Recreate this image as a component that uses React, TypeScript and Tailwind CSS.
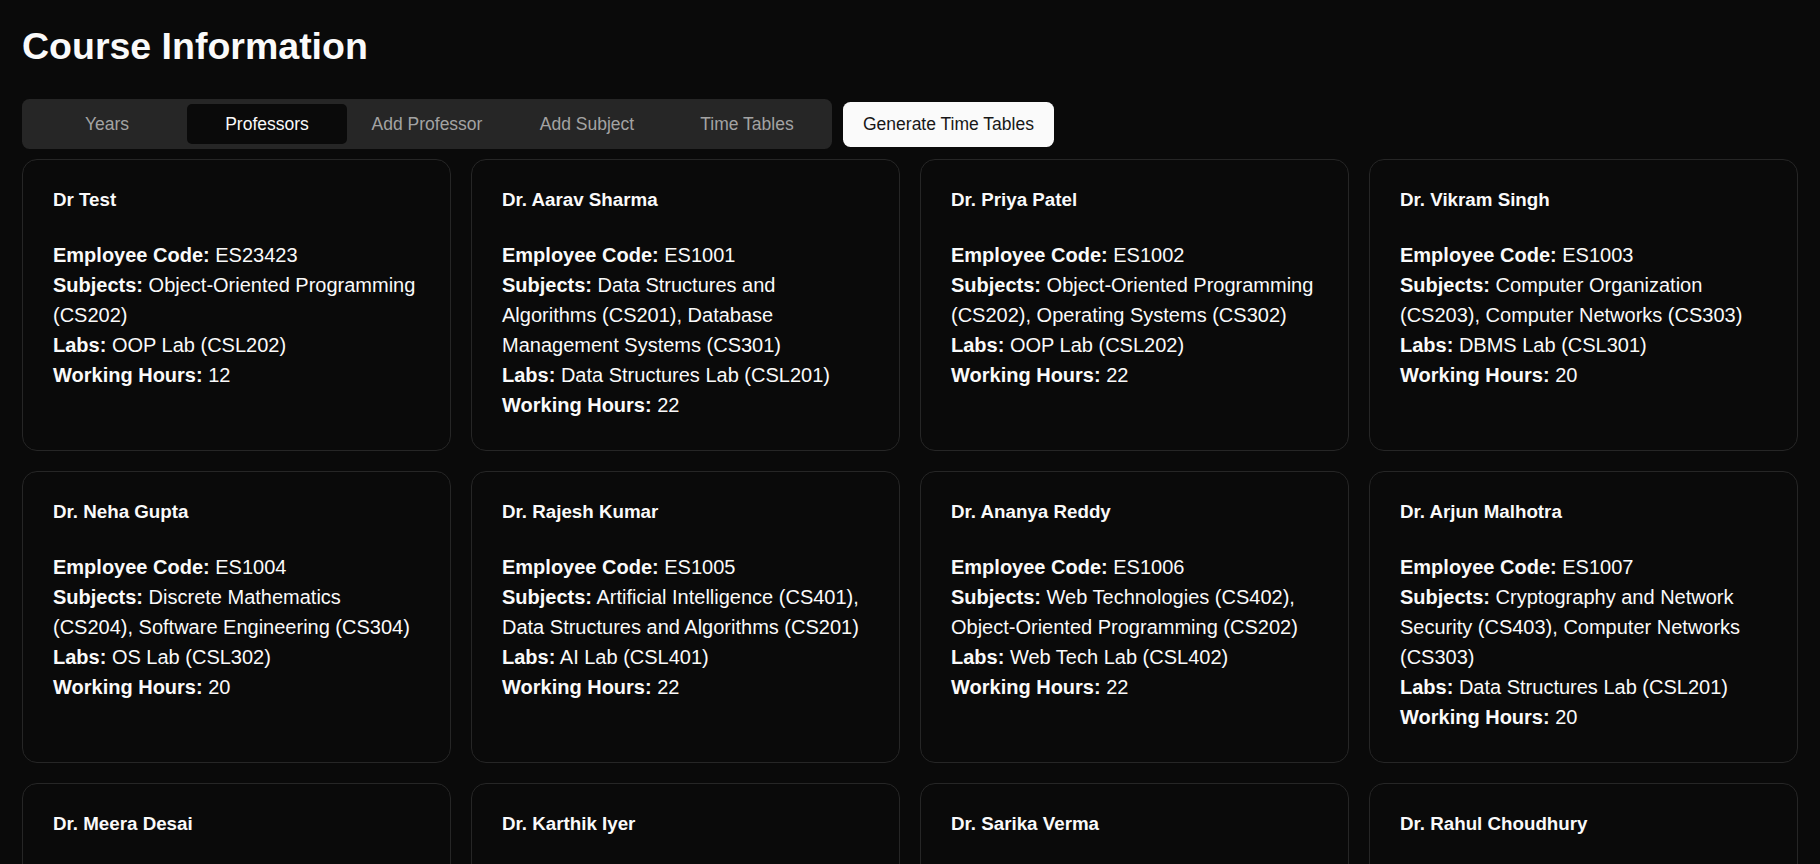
import React from "react";

type Prof = {
  name: string;
  code: string;
  subjects: string;
  labs: string;
  hours: number;
};

const professors: Prof[] = [
  { name: "Dr Test", code: "ES23423", subjects: "Object-Oriented Programming (CS202)", labs: "OOP Lab (CSL202)", hours: 12 },
  { name: "Dr. Aarav Sharma", code: "ES1001", subjects: "Data Structures and Algorithms (CS201), Database Management Systems (CS301)", labs: "Data Structures Lab (CSL201)", hours: 22 },
  { name: "Dr. Priya Patel", code: "ES1002", subjects: "Object-Oriented Programming (CS202), Operating Systems (CS302)", labs: "OOP Lab (CSL202)", hours: 22 },
  { name: "Dr. Vikram Singh", code: "ES1003", subjects: "Computer Organization (CS203), Computer Networks (CS303)", labs: "DBMS Lab (CSL301)", hours: 20 },
  { name: "Dr. Neha Gupta", code: "ES1004", subjects: "Discrete Mathematics (CS204), Software Engineering (CS304)", labs: "OS Lab (CSL302)", hours: 20 },
  { name: "Dr. Rajesh Kumar", code: "ES1005", subjects: "Artificial Intelligence (CS401), Data Structures and Algorithms (CS201)", labs: "AI Lab (CSL401)", hours: 22 },
  { name: "Dr. Ananya Reddy", code: "ES1006", subjects: "Web Technologies (CS402), Object-Oriented Programming (CS202)", labs: "Web Tech Lab (CSL402)", hours: 22 },
  { name: "Dr. Arjun Malhotra", code: "ES1007", subjects: "Cryptography and Network Security (CS403), Computer Networks (CS303)", labs: "Data Structures Lab (CSL201)", hours: 20 },
  { name: "Dr. Meera Desai", code: "ES1008", subjects: "Operating Systems (CS302), Database Management Systems (CS301)", labs: "OS Lab (CSL302)", hours: 20 },
  { name: "Dr. Karthik Iyer", code: "ES1009", subjects: "Computer Networks (CS303), Web Technologies (CS402)", labs: "Web Tech Lab (CSL402)", hours: 22 },
  { name: "Dr. Sarika Verma", code: "ES1010", subjects: "Software Engineering (CS304), Discrete Mathematics (CS204)", labs: "DBMS Lab (CSL301)", hours: 20 },
  { name: "Dr. Rahul Choudhury", code: "ES1011", subjects: "Artificial Intelligence (CS401), Cryptography and Network Security (CS403)", labs: "AI Lab (CSL401)", hours: 22 },
];

const tabs = ["Years", "Professors", "Add Professor", "Add Subject", "Time Tables"];

export default function App() {
  return (
    <div
      className="min-h-screen bg-[#0a0a0a] text-[#fafafa] px-[22px] pt-[24px] pb-[24px]"
      style={{ fontFamily: '"Liberation Sans", Arial, sans-serif' }}
    >
      <h1 className="text-[37.5px] leading-[45px] font-bold mb-[30px] text-[#fafafa]">Course Information</h1>

      <div className="flex items-center gap-[11px]">
        <div className="flex h-[50px] items-center rounded-[7.5px] bg-[#262626] p-[5px]">
          {tabs.map((t) => (
            <div
              key={t}
              className={
                t === "Professors"
                  ? "flex h-[40px] w-[160px] items-center justify-center rounded-[5px] bg-[#0a0a0a] text-[17.5px] text-[#fafafa]"
                  : "flex h-[40px] w-[160px] items-center justify-center rounded-[5px] text-[17.5px] text-[#a3a3a3]"
              }
            >
              {t}
            </div>
          ))}
        </div>
        <button className="h-[45px] rounded-[7.5px] bg-[#fafafa] px-[20px] text-[17.5px] text-[#171717]">
          Generate Time Tables
        </button>
      </div>

      <div className="mt-[10px] grid grid-cols-4 gap-[20px]">
        {professors.map((p) => (
          <div key={p.name} className="rounded-[15px] border border-[#262626] bg-[#0a0a0a] p-[30px]">
            <div className="text-[18.75px] leading-[20px] font-bold">{p.name}</div>
            <div className="mt-[30px] text-[20px] leading-[30px]">
              <div>
                <span className="font-bold">Employee Code:</span> {p.code}
              </div>
              <div>
                <span className="font-bold">Subjects:</span> {p.subjects}
              </div>
              <div>
                <span className="font-bold">Labs:</span> {p.labs}
              </div>
              <div>
                <span className="font-bold">Working Hours:</span> {p.hours}
              </div>
            </div>
          </div>
        ))}
      </div>
    </div>
  );
}
